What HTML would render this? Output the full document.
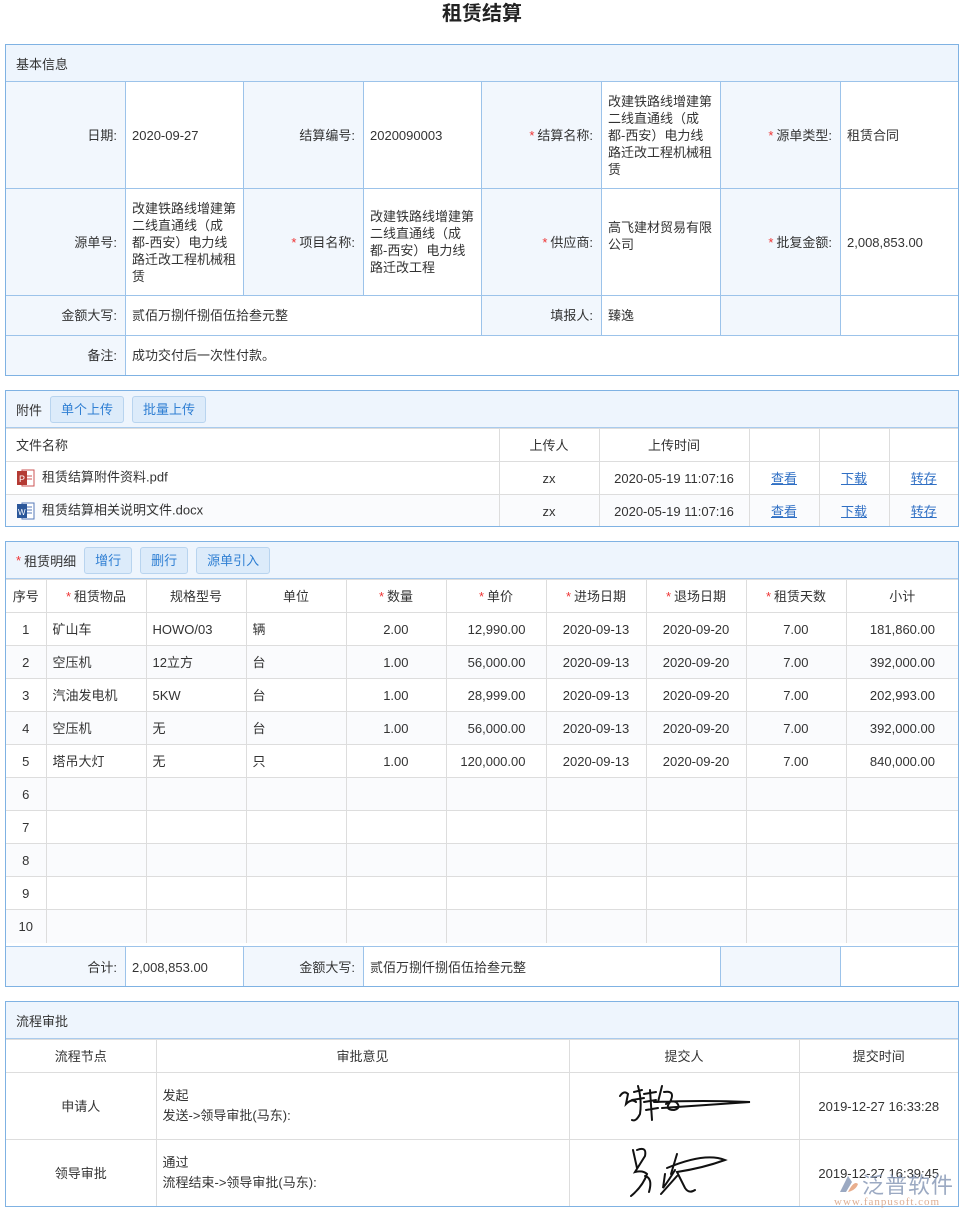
<!DOCTYPE html>
<html><head><meta charset="utf-8"><style>
*{box-sizing:border-box;margin:0;padding:0}
body{width:964px;height:1217px;background:#fff;font-family:"Liberation Sans","Noto Sans CJK SC",sans-serif;font-size:13px;color:#333;position:relative;overflow:hidden}
.title{position:absolute;top:0;left:0;width:964px;text-align:center;font-size:20px;font-weight:bold;line-height:28px;color:#222}
.box{position:absolute;left:5px;width:954px;border:1px solid #7fb2e3;overflow:hidden}
.hd{background:#eef5fd;border-bottom:1px solid #a9cbed;height:37px;display:flex;align-items:center;padding-left:10px}
.btn{display:inline-block;margin-left:8px;height:27px;line-height:25px;padding:0 10px;background:#dcebfa;border:1px solid #b8d4ef;border-radius:3px;color:#2f7fd3}
table{border-collapse:collapse;width:100%;table-layout:fixed}
td{border:1px solid #9cc3ea;padding:0 6px;vertical-align:middle;line-height:17px}
.l{background:#f2f7fd;text-align:right;padding-right:8px}
.s{color:#e33;margin-right:3px}
.g td{border:1px solid #ddd;height:33px}
.g tr td:first-child{border-left:none}.g tr td:last-child{border-right:none}
.g tr:last-child td{border-bottom:none}
.c{text-align:center}.r{text-align:right;padding-right:10px}
a{color:#2f6fc4;text-decoration:underline}
.alt{background:#fafbfd}
.q{text-align:right;padding-right:37px}.p{text-align:right;padding-right:20px}.t{text-align:right;padding-right:23px}
</style></head><body>
<div class="title">租赁结算</div>

<div class="box" style="top:44px;height:332px">
<div class="hd">基本信息</div>
<table style="margin:-1px 0 0 -1px;width:954px">
<colgroup><col style="width:120px"><col style="width:118px"><col style="width:120px"><col style="width:118px"><col style="width:120px"><col style="width:119px"><col style="width:120px"><col style="width:119px"></colgroup>
<tr style="height:107px"><td class="l">日期:</td><td>2020-09-27</td><td class="l">结算编号:</td><td>2020090003</td><td class="l"><span class="s">*</span>结算名称:</td><td>改建铁路线增建第二线直通线（成都-西安）电力线路迁改工程机械租赁</td><td class="l"><span class="s">*</span>源单类型:</td><td>租赁合同</td></tr>
<tr style="height:107px"><td class="l">源单号:</td><td>改建铁路线增建第二线直通线（成都-西安）电力线路迁改工程机械租赁</td><td class="l"><span class="s">*</span>项目名称:</td><td>改建铁路线增建第二线直通线（成都-西安）电力线路迁改工程</td><td class="l"><span class="s">*</span>供应商:</td><td style="vertical-align:top;padding-top:30px">高飞建材贸易有限公司</td><td class="l"><span class="s">*</span>批复金额:</td><td>2,008,853.00</td></tr>
<tr style="height:40px"><td class="l">金额大写:</td><td colspan="3">贰佰万捌仟捌佰伍拾叁元整</td><td class="l">填报人:</td><td>臻逸</td><td class="l"></td><td></td></tr>
<tr style="height:40px"><td class="l">备注:</td><td colspan="7">成功交付后一次性付款。</td></tr>
</table></div>

<div class="box" style="top:390px;height:137px">
<div class="hd">附件<span class="btn">单个上传</span><span class="btn">批量上传</span></div>
<table class="g">
<colgroup><col style="width:493px"><col style="width:100px"><col style="width:150px"><col style="width:70px"><col style="width:70px"><col></colgroup>
<tr><td style="padding-left:10px;height:32px">文件名称</td><td class="c">上传人</td><td class="c">上传时间</td><td></td><td></td><td></td></tr>
<tr><td style="padding-left:10px;height:33px"><svg width="20" height="20" style="vertical-align:middle;margin-right:6px"><rect x="6" y="2" width="12" height="16" fill="#fff" stroke="#c55" /><line x1="9" y1="8" x2="16" y2="8" stroke="#c55"/><line x1="9" y1="11" x2="16" y2="11" stroke="#c55"/><rect x="1" y="3" width="10" height="14" fill="#b43a33"/><text x="3" y="14" font-size="9" fill="#fff" font-family="Liberation Sans">P</text></svg>租赁结算附件资料.pdf</td><td class="c">zx</td><td class="c">2020-05-19 11:07:16</td><td class="c"><a>查看</a></td><td class="c"><a>下载</a></td><td class="c"><a>转存</a></td></tr>
<tr class="alt"><td style="padding-left:10px;height:32px"><svg width="20" height="20" style="vertical-align:middle;margin-right:6px"><rect x="6" y="2" width="12" height="16" fill="#fff" stroke="#557ab8"/><line x1="10" y1="6" x2="16" y2="6" stroke="#557ab8"/><line x1="10" y1="9" x2="16" y2="9" stroke="#557ab8"/><line x1="10" y1="12" x2="16" y2="12" stroke="#557ab8"/><rect x="1" y="3" width="10" height="14" fill="#2b579a"/><text x="2" y="14" font-size="8" fill="#fff" font-family="Liberation Sans">W</text></svg>租赁结算相关说明文件.docx</td><td class="c">zx</td><td class="c">2020-05-19 11:07:16</td><td class="c"><a>查看</a></td><td class="c"><a>下载</a></td><td class="c"><a>转存</a></td></tr>
</table></div>

<div class="box" style="top:541px;height:446px">
<div class="hd"><span class="s">*</span>租赁明细<span class="btn">增行</span><span class="btn">删行</span><span class="btn">源单引入</span></div>
<table class="g">
<colgroup><col style="width:40px"><col style="width:100px"><col style="width:100px"><col style="width:100px"><col style="width:100px"><col style="width:100px"><col style="width:100px"><col style="width:100px"><col style="width:100px"><col></colgroup>
<tr><td class="c" style="padding:0;height:32px">序号</td><td class="c"><span class="s">*</span>租赁物品</td><td class="c">规格型号</td><td class="c">单位</td><td class="c"><span class="s">*</span>数量</td><td class="c"><span class="s">*</span>单价</td><td class="c"><span class="s">*</span>进场日期</td><td class="c"><span class="s">*</span>退场日期</td><td class="c"><span class="s">*</span>租赁天数</td><td class="c">小计</td></tr>
<tr><td class="c">1</td><td>矿山车</td><td>HOWO/03</td><td>辆</td><td class="q">2.00</td><td class="p">12,990.00</td><td class="c">2020-09-13</td><td class="c">2020-09-20</td><td class="q">7.00</td><td class="t">181,860.00</td></tr>
<tr class="alt"><td class="c">2</td><td>空压机</td><td>12立方</td><td>台</td><td class="q">1.00</td><td class="p">56,000.00</td><td class="c">2020-09-13</td><td class="c">2020-09-20</td><td class="q">7.00</td><td class="t">392,000.00</td></tr>
<tr><td class="c">3</td><td>汽油发电机</td><td>5KW</td><td>台</td><td class="q">1.00</td><td class="p">28,999.00</td><td class="c">2020-09-13</td><td class="c">2020-09-20</td><td class="q">7.00</td><td class="t">202,993.00</td></tr>
<tr class="alt"><td class="c">4</td><td>空压机</td><td>无</td><td>台</td><td class="q">1.00</td><td class="p">56,000.00</td><td class="c">2020-09-13</td><td class="c">2020-09-20</td><td class="q">7.00</td><td class="t">392,000.00</td></tr>
<tr><td class="c">5</td><td>塔吊大灯</td><td>无</td><td>只</td><td class="q">1.00</td><td class="p">120,000.00</td><td class="c">2020-09-13</td><td class="c">2020-09-20</td><td class="q">7.00</td><td class="t">840,000.00</td></tr>
<tr class="alt"><td class="c">6</td><td></td><td></td><td></td><td></td><td></td><td></td><td></td><td></td><td></td></tr>
<tr><td class="c">7</td><td></td><td></td><td></td><td></td><td></td><td></td><td></td><td></td><td></td></tr>
<tr class="alt"><td class="c">8</td><td></td><td></td><td></td><td></td><td></td><td></td><td></td><td></td><td></td></tr>
<tr><td class="c">9</td><td></td><td></td><td></td><td></td><td></td><td></td><td></td><td></td><td></td></tr>
<tr class="alt"><td class="c">10</td><td></td><td></td><td></td><td></td><td></td><td></td><td></td><td></td><td></td></tr>
</table>
<table style="position:absolute;left:-1px;top:404px;width:954px">
<colgroup><col style="width:120px"><col style="width:118px"><col style="width:120px"><col style="width:357px"><col style="width:120px"><col></colgroup>
<tr style="height:41px"><td class="l">合计:</td><td>2,008,853.00</td><td class="l">金额大写:</td><td>贰佰万捌仟捌佰伍拾叁元整</td><td class="l"></td><td></td></tr>
</table></div>

<div class="box" style="top:1001px;height:206px">
<div class="hd">流程审批</div>
<table class="g">
<colgroup><col style="width:150px"><col style="width:413px"><col style="width:230px"><col></colgroup>
<tr><td class="c">流程节点</td><td class="c">审批意见</td><td class="c">提交人</td><td class="c">提交时间</td></tr>
<tr><td class="c" style="height:67px">申请人</td><td style="line-height:20px">发起<br>发送-&gt;领导审批(马东):</td><td class="c"><svg width="140" height="48" viewBox="0 0 140 48"><path d="M6 16 Q10 10 14 14 L12 24 Q18 18 22 22 M20 12 L28 10 M18 20 L30 18 M24 6 Q28 20 26 34 Q22 42 18 40 M30 14 L42 12 M30 22 L42 20 M36 10 L38 40 M32 30 L44 28 M48 6 L44 22 M50 12 Q62 10 56 22 Q50 30 60 30 Q68 28 62 22 Q56 20 52 24 M40 22 Q90 20 136 22 Q92 25 48 28" fill="none" stroke="#111" stroke-width="2" stroke-linecap="round"/></svg></td><td class="c">2019-12-27 16:33:28</td></tr>
<tr><td class="c" style="height:67px">领导审批</td><td style="line-height:20px">通过<br>流程结束-&gt;领导审批(马东):</td><td class="c"><svg width="130" height="54" viewBox="0 0 130 54"><path d="M14 6 L18 24 M18 6 Q28 2 26 12 L16 28 Q24 26 28 30 Q24 42 12 52 M26 32 Q34 34 30 48 M46 30 L44 44 Q50 36 56 26 M58 10 L52 30 M48 24 Q86 8 106 16 Q84 24 58 28 L66 44 Q70 50 76 46 M58 32 L42 50" fill="none" stroke="#111" stroke-width="2" stroke-linecap="round"/></svg></td><td class="c">2019-12-27 16:39:45</td></tr>
</table></div>

<div style="position:absolute;left:834px;top:1170px;width:125px;height:40px;opacity:.85">
<svg width="24" height="24" style="position:absolute;left:2px;top:2px"><path d="M4 20 L12 4 L16 10 L10 20Z" fill="#8a9bb8"/><path d="M12 20 Q18 8 22 12 Q20 18 12 20Z" fill="#e6a07a"/></svg>
<div style="position:absolute;left:28px;top:-2px;font-size:22px;color:#8a9bb8;letter-spacing:1px;font-family:'Noto Sans CJK SC',sans-serif">泛普软件</div>
<div style="position:absolute;left:0;top:26px;font-size:11px;color:#d9a080;font-family:'Liberation Serif',serif;letter-spacing:1px">www.fanpusoft.com</div>
</div>
</body></html>
